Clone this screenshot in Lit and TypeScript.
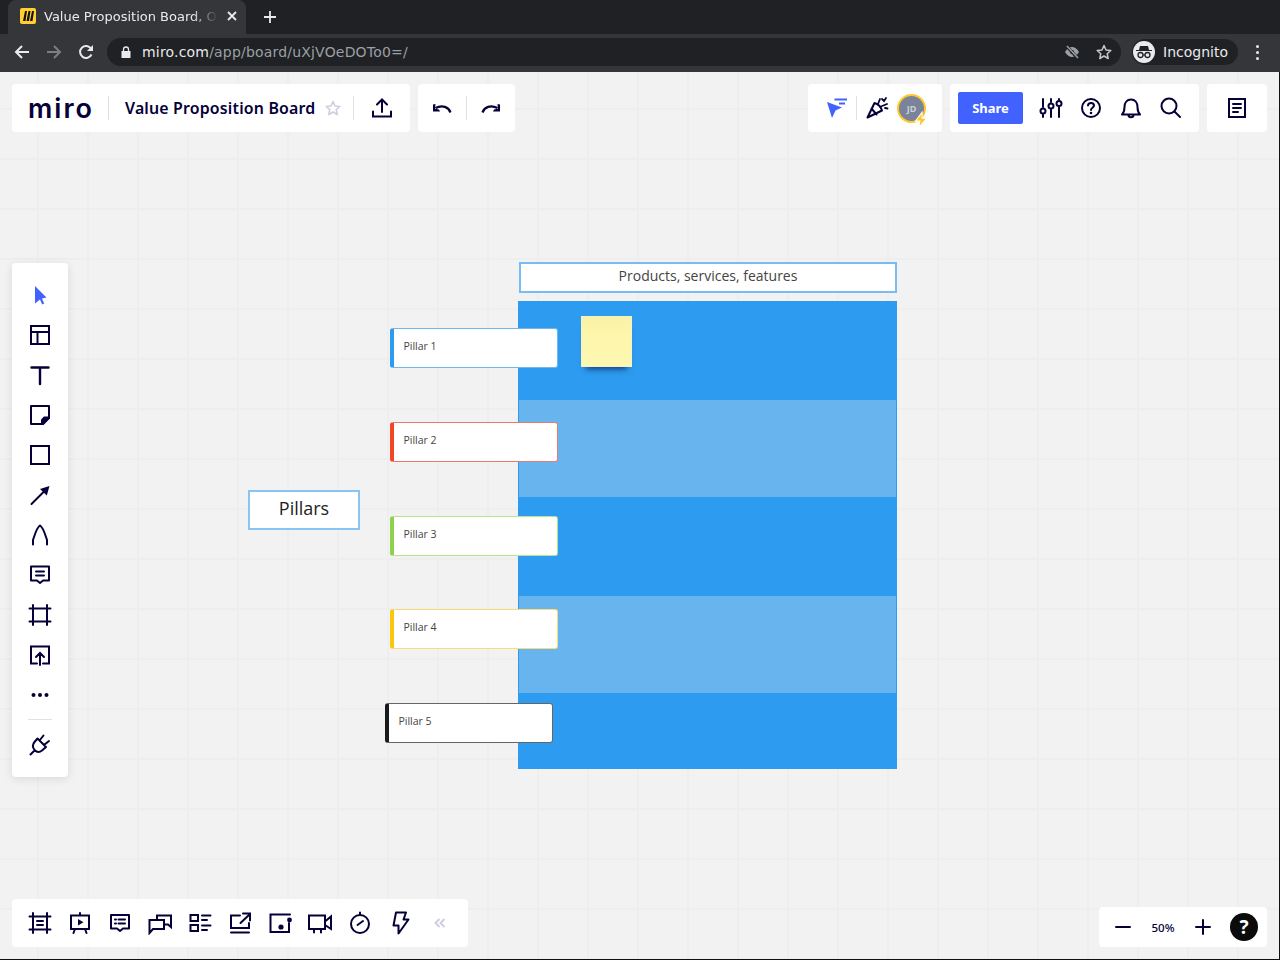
import { LitElement, html, css, svg } from "lit";
import { customElement } from "lit/decorators.js";

const ic = (body: unknown, size = 24) => html`<svg class="ic" width=${size} height=${size} viewBox="0 0 24 24">${body}</svg>`;

const I = {
  cursor: svg`<path class="bf" d="M7 3L18.500 14.500 14 15.500 16.200 20.500 14.200 21.500 12 16.500 7 20.500Z"/>`,
  layout: svg`<path d="M3 3H21V21H3ZM3 9H21M9.500 9V21"/>`,
  text: svg`<path stroke-width="2.400" d="M3.500 4.500H20.500M12 4.500V21"/>`,
  sticky: svg`<path d="M3 3H21V14.500L14.500 21H3Z" stroke-linejoin="round"/><path class="f" stroke="none" d="M22 13.500V15.500L15.500 22H13V16.500L16 13.500Z"/>`,
  rect: svg`<path d="M3 3H21V21H3Z"/>`,
  arrow: svg`<path d="M3.500 21L15.500 9"/><path class="f" stroke="none" d="M21.500 3L18.800 12.600 12 6Z"/>`,
  pen: svg`<path d="M5 21.500V17C6.500 13 8.500 4.500 12 2.500 15.500 4.500 17.500 13 19 17V21.500"/>`,
  comment: svg`<path d="M3 3.500H21V17.500H15L12 20 9 17.500H3ZM8 8.500H16M8 12.500H16" stroke-linejoin="round"/>`,
  frame: svg`<path d="M1.500 5.500H22.500M1.500 18.500H22.500M5 2V22M19 2V22"/>`,
  upload: svg`<path d="M9 20.500H3V3.500H21V20.500H15M12 22V10.500M8 14L12 10 16 14"/>`,
  dots: svg`<g class="f" stroke="none"><circle cx="5.500" cy="12" r="2"/><circle cx="12" cy="12" r="2"/><circle cx="18.500" cy="12" r="2"/></g>`,
  plug: svg`<path stroke-linejoin="round" d="M9.500 5.500L18 14 14 17.500C11.500 19.500 8.500 19 6.500 17 5 15 4 12 6.500 9ZM11.500 7.500L15.500 2.500M16 12L21 8M6.500 17.500L2.500 21.500"/>`,
  frames: svg`<path d="M1.500 5.500H22.500M1.500 18.500H22.500M5 2V22M19 2V22M9 10H15M9 14H15"/>`,
  present: svg`<path d="M3 4.500H21V18H3ZM12 2V4.500M7 18L5.500 22M17 18L18.500 22"/><path class="f" stroke="none" d="M10 8L15.500 11.250 10 14.500Z"/>`,
  chatlist: svg`<path stroke-linejoin="round" d="M3 4H21V17.500H15L12 20 9 17.500H3ZM10.500 8.500H17M10.500 12.500H17M7 8.500H8M7 12.500H8"/>`,
  chats: svg`<path d="M9 9V4.500H23V16L20 13.500H16M1.500 22V9H16V18H5Z"/>`,
  cards: svg`<path d="M2.500 4H10V10H2.500ZM2.500 14H10V20H2.500ZM14 4.500H22.500M14 9H19M14 14.500H22.500M14 19H19"/>`,
  shareout: svg`<path d="M12 4.500H3V17H21V12M3 21.500H21M12.500 12L21.500 3.500M15 2.500H22V9.500"/>`,
  note: svg`<path d="M22 3.500H2.500V21H21V12"/><circle class="f" stroke="none" cx="13" cy="16" r="2.600"/><circle class="f" stroke="none" cx="21.500" cy="9" r="2.400"/>`,
  video: svg`<path d="M1 4.500H17V18H1ZM17 10.500L23 5.500V18L17 14M6 18V21.500M13 18V21.500"/>`,
  timer: svg`<circle cx="12" cy="13" r="9"/><path d="M12 1.500V4M9.500 14L15 10"/>`,
  bolt: svg`<path stroke-linejoin="round" d="M8 1.500H18L15.500 8.500H20.500L10.500 22.500V14.500H5.500Z"/>`,
  share: svg`<path d="M12 16V3.500M7 8.500L12 3.500 17 8.500M3 15.500V20.500H21V15.500"/>`,
  undo: svg`<path stroke-width="2.200" stroke-linecap="butt" d="M20.500 16.500C18.500 11 12.500 8.500 5.500 12"/><path class="f" stroke="none" d="M3 8.500V15.500H10L9 13.500 5 12.800 5.500 8Z"/>`,
  redo: svg`<path stroke-width="2.200" stroke-linecap="butt" d="M3.500 16.500C5.500 11 11.500 8.500 18.500 12"/><path class="f" stroke="none" d="M21 8.500V15.500H14L15 13.500 19 12.800 18.500 8Z"/>`,
  sliders: svg`<path d="M4 3V11M4 18.500V21M12 3V6M12 13.500V21M20 3V3.500M20 11.500V21"/><circle cx="4" cy="15" r="2.500"/><circle cx="12" cy="10" r="2.500"/><circle cx="20" cy="7.500" r="2.500"/>`,
  question: svg`<circle cx="12" cy="12" r="9"/><path d="M9 9.500C9 7.800 10.300 7 12 7S15 8 15 9.600C15 11.800 12 11.700 12 14"/><circle class="f" stroke="none" cx="12" cy="17" r="1.300"/>`,
  bell: svg`<path stroke-linejoin="round" d="M3 18.500C5.500 16 5.500 14 5.500 11 5.500 6.500 8 3.500 12 3.500S18.500 6.500 18.500 11C18.500 14 18.500 16 21 18.500ZM9.500 19C9.500 22 14.500 22 14.500 19"/>`,
  search: svg`<circle cx="10" cy="10" r="7.500"/><path d="M15.500 15.500L21 21"/>`,
  doc: svg`<path d="M4 3H20V21H4ZM8 8H16M8 12H16M8 16H13"/>`,
  party: svg`<path stroke-linejoin="round" d="M9.500 7L2.500 21.500 17 14.500C16 11 13 8 9.500 7ZM6.500 12.500L11.500 18.500"/><path stroke-width="1.800" d="M13 8L15 3M16 10.500L22 8M17 3L19 5 21 2M20 12L22.500 12.500"/>`,
  pointer: svg`<path class="bf" d="M2 6L17 11.500 10.500 14.500 7 22Z"/><path class="bs" stroke-linecap="butt" d="M9.500 3.500H22M14 7.500H20"/>`,
};

const railIcons = [I.cursor, I.layout, I.text, I.sticky, I.rect, I.arrow, I.pen, I.comment, I.frame, I.upload, I.dots];
const dockIcons = [I.frames, I.present, I.chatlist, I.chats, I.cards, I.shareout, I.note, I.video, I.timer, I.bolt];

const pillars = [
  { name: "Pillar 1", cls: "blue", x: 390, y: 328.4 },
  { name: "Pillar 2", cls: "red", x: 390, y: 422 },
  { name: "Pillar 3", cls: "green", x: 390, y: 516 },
  { name: "Pillar 4", cls: "yellow", x: 390, y: 609.4 },
  { name: "Pillar 5", cls: "black", x: 385, y: 703 },
];
const bands = [
  { h: 98, light: false },
  { h: 97, light: true },
  { h: 99, light: false },
  { h: 97, light: true },
  { h: 75, light: false },
];

@customElement("app-root")
export class AppRoot extends LitElement {
  static styles = css`
    :host { display: block; width: 1280px; height: 960px; overflow: hidden; font-family: "Noto Sans", sans-serif; position: relative; }
    .ic { display: block; fill: none; stroke: #050038; stroke-width: 2; stroke-linecap: round; }
    .ic .f { fill: #050038; }
    .ic .bf { fill: #4262ff; stroke: none; }
    .ic .bs { stroke: #4262ff; stroke-width: 2; fill: none; }

    .tabs { height: 34px; background: #202124; display: flex; align-items: flex-end; padding-left: 8px; box-sizing: border-box; }
    .tab { width: 238px; height: 34px; background: #35363a; border-radius: 8px 8px 0 0; display: flex; align-items: center; padding: 0 8px 2px 12px; box-sizing: border-box; gap: 8px; font: 13px "DejaVu Sans", sans-serif; color: #e8eaed; }
    .fav { width: 16px; height: 16px; background: #ffd02f; border-radius: 2px; display: block; flex: none; }
    .title { flex: 1; overflow: hidden; white-space: nowrap; -webkit-mask-image: linear-gradient(90deg, #000 85%, transparent 100%); mask-image: linear-gradient(90deg, #000 85%, transparent 100%); }
    .plus { margin-left: 17px; margin-bottom: 10px; }
    .navbar { height: 38px; background: #35363a; display: flex; align-items: center; padding-left: 6px; padding-bottom: 2px; box-sizing: border-box; }
    .nav { width: 32px; display: flex; justify-content: center; }
    .omni { margin-left: 5px; width: 1014px; height: 28px; border-radius: 14px; background: #202124; display: flex; align-items: center; padding: 0 9px 0 14px; box-sizing: border-box; font: 14px "DejaVu Sans", sans-serif; color: #e8eaed; }
    .omni .url { margin-left: 11px; flex: 1; letter-spacing: 0.19px; }
    .omni .url span { color: #9aa0a6; }
    .omni .right { display: flex; gap: 16px; align-items: center; }
    .pill { margin-left: 11px; width: 106px; height: 26px; border-radius: 13px; background: #202124; display: flex; align-items: center; padding-left: 1px; gap: 8px; box-sizing: border-box; font: 14px "DejaVu Sans", sans-serif; color: #e8eaed; }
    .spy { width: 22px; height: 22px; border-radius: 50%; background: #e8eaed; display: flex; align-items: center; justify-content: center; }
    .kebab { margin-left: 18px; display: flex; flex-direction: column; gap: 3px; }
    .kebab i { width: 3px; height: 3px; border-radius: 50%; background: #e8eaed; display: block; }

    .canvas { position: absolute; left: 0; top: 72px; width: 1280px; height: 888px; background-color: #f2f2f2;
      background-image: linear-gradient(#eeeeee 2px, transparent 2px), linear-gradient(90deg, #eeeeee 2px, transparent 2px);
      background-size: 50px 50px; background-position: 37px 36px; }
    .edge-b { position: absolute; left: 0; right: 0; bottom: 0; height: 1px; background: #111; }
    .edge-r { position: absolute; top: 72px; right: 0; bottom: 0; width: 1px; background: #111; }

    .panel { position: absolute; background: #fff; border-radius: 4px; display: flex; align-items: center; box-sizing: border-box; }
    .t { top: 12px; height: 48px; }
    .logo { font: 600 27px/1 "Inter", sans-serif; color: #050038; letter-spacing: 2px; margin-left: 16px; width: 80px; flex: none; }
    .sep { width: 1px; height: 24px; background: #e1e0e7; flex: none; }
    .bname { font: 600 15.900px "Noto Sans", sans-serif; letter-spacing: 0.17px; color: #050038; margin-left: 16px; white-space: nowrap; }
    .star { margin-left: 10px; margin-right: 12px; flex: none; }
    .share { width: 65px; height: 32px; border-radius: 2px; background: #4262ff; color: #fff; font: 700 13px "Noto Sans", sans-serif; display: flex; align-items: center; justify-content: center; margin-left: 8px; }
    .avatar { position: relative; width: 29px; height: 29px; border-radius: 50%; box-sizing: border-box; border: 2.500px solid #fdc82f; background: #7a8399; color: #c9ced8; font: 700 9px "Noto Sans", sans-serif; display: flex; align-items: center; justify-content: center; }
    .avatar svg { position: absolute; right: -5px; bottom: -8px; }

    .rail { left: 12px; top: 191px; width: 56px; height: 514px; flex-direction: column; padding-top: 12px; box-shadow: 0 2px 10px rgba(5,0,56,.1); }
    .cell { width: 40px; height: 40px; display: flex; align-items: center; justify-content: center; flex: none; }
    .hr { width: 24px; height: 1px; background: #e1e0e7; margin: 4px 0 5px; flex: none; }
    .dock { left: 12px; top: 827px; width: 456px; height: 48px; padding-left: 8px; }
    .zoomp { left: 1099px; top: 835px; width: 168px; height: 40px; padding-left: 4px; }
    .pct { width: 40px; text-align: center; font: 500 11.500px "Noto Sans", sans-serif; color: #050038; }
    .help { width: 28px; height: 28px; margin-left: 7px; border-radius: 50%; background: #0b0b0b; color: #fff; font: 700 19px/28px "Noto Sans", sans-serif; text-align: center; }

    .head { position: absolute; left: 519px; top: 190px; width: 378px; height: 31px; background: #fff; border: 2px solid #79bcf3; box-sizing: border-box; font: 14px/23px "Open Sans", sans-serif; color: #444; text-align: center; }
    .board { position: absolute; left: 518px; top: 229px; width: 379px; height: 468px; display: flex; flex-direction: column; background: #2d9bf0; border: 1px solid #2d9bf0; box-sizing: border-box; }
    .band.light { background: #68b4ef; }
    .tag { position: absolute; left: 248px; top: 418px; width: 112px; height: 40px; background: #fff; border: 2px solid #8ac4f2; box-sizing: border-box; font: 18px/32px "Open Sans", sans-serif; color: #222; text-align: center; }
    .card { position: absolute; width: 168px; height: 40px; background: #fff; border: 1px solid var(--c); border-left: 4px solid var(--s); border-radius: 3px; box-sizing: border-box; font: 10.500px/34px "Open Sans", sans-serif; color: #444; padding-left: 9.500px; }
    .blue { --c: #6db7f2; --s: #2d9bf0; }
    .red { --c: #ea7a6b; --s: #f24726; }
    .green { --c: #b5e48e; --s: #8fd14f; }
    .yellow { --c: #f8dc78; --s: #fac710; }
    .black { --c: #666; --s: #1a1a1a; }
    .note { position: absolute; left: 581px; top: 244px; width: 51px; height: 51px; box-sizing: border-box; border: 1px solid #f7f3c0; background: linear-gradient(#f8f2a6, #fdf6aa 30%, #fdf7b2); box-shadow: 0 7px 6px -5px rgba(5,15,70,.7); }
  `;

  render() {
    return html`
      <div class="tabs">
        <div class="tab">
          <svg class="fav" viewBox="0 0 16 16"><path d="M3 13L5 3H7L5.500 13ZM6.500 13L8.500 3H10.500L9 13ZM10 13L12 3H14L12.500 13Z" fill="#111"/></svg>
          <div class="title">Value Proposition Board, Online Whiteboard</div>
          <svg width="12" height="12" viewBox="0 0 12 12"><path d="M2 2L10 10M10 2L2 10" stroke="#e8eaed" stroke-width="1.800"/></svg>
        </div>
        <svg class="plus" width="14" height="14" viewBox="0 0 14 14"><path d="M7 1V13M1 7H13" stroke="#e8eaed" stroke-width="1.800"/></svg>
      </div>
      <div class="navbar">
        <div class="nav"><svg width="16" height="16" viewBox="0 0 16 16"><path d="M15 8H2M8 2L2 8l6 6" fill="none" stroke="#e8eaed" stroke-width="2"/></svg></div>
        <div class="nav"><svg width="16" height="16" viewBox="0 0 16 16"><path d="M1 8H14M8 2l6 6-6 6" fill="none" stroke="#7c7e82" stroke-width="2"/></svg></div>
        <div class="nav"><svg width="16" height="16" viewBox="0 0 16 16"><path d="M13.500 10.500A6 6 0 1 1 13 4.500" fill="none" stroke="#e8eaed" stroke-width="2"/><path d="M15 1V7H9Z" fill="#e8eaed"/></svg></div>
        <div class="omni">
          <svg width="10" height="12" viewBox="0 0 10 12"><path d="M0.500 5H9.500V12H0.500Z" fill="#e8eaed"/><path d="M2.500 5V3.500a2.500 2.500 0 0 1 5 0V5" fill="none" stroke="#e8eaed" stroke-width="1.300"/></svg>
          <div class="url">miro.com<span>/app/board/uXjVOeDOTo0=/</span></div>
          <div class="right">
            <svg width="16" height="14" viewBox="0 0 16 14"><path d="M1 7C3 3.500 5.500 2 8 2s5 1.500 7 5c-2 3.500-4.500 5-7 5S3 10.500 1 7Z" fill="#9aa0a6"/><circle cx="8" cy="7" r="2" fill="#202124"/><path d="M2.500 1L13.500 13" stroke="#202124" stroke-width="3.200"/><path d="M3 1L14 13" stroke="#9aa0a6" stroke-width="1.500"/></svg>
            <svg width="16" height="16" viewBox="0 0 16 16"><path d="M8 1.500L10 6l4.800.5-3.600 3.200 1 4.800L8 12l-4.200 2.500 1-4.800L1.200 6.500 6 6Z" fill="none" stroke="#c4c7c5" stroke-width="1.500" stroke-linejoin="round"/></svg>
          </div>
        </div>
        <div class="pill">
          <div class="spy"><svg width="18" height="16" viewBox="0 0 18 16"><path d="M5 2H13L14 6H17V7H1V6H4Z" fill="#202124"/><circle cx="5.500" cy="11" r="2.500" fill="none" stroke="#202124" stroke-width="1.300"/><circle cx="12.500" cy="11" r="2.500" fill="none" stroke="#202124" stroke-width="1.300"/><path d="M8 11H10" stroke="#202124"/></svg></div>
          Incognito
        </div>
        <div class="kebab"><i></i><i></i><i></i></div>
      </div>

      <div class="canvas">
        <div class="head">Products, services, features</div>
        <div class="board">
          ${bands.map((b) => html`<div class="band ${b.light ? "light" : ""}" style="height:${b.h}px"></div>`)}
        </div>
        <div class="note"></div>
        <div class="tag">Pillars</div>
        ${pillars.map((p) => html`<div class="card ${p.cls}" style="left:${p.x}px;top:${p.y - 72}px">${p.name}</div>`)}

        <div class="panel t" style="left:12px;width:398px">
          <div class="logo">miro</div>
          <div class="sep"></div>
          <div class="bname">Value Proposition Board</div>
          <svg class="star" width="16" height="16" viewBox="0 0 16 16"><path d="M8 1.500L10 6l4.800.5-3.600 3.200 1 4.800L8 12l-4.200 2.500 1-4.800L1.200 6.500 6 6Z" fill="none" stroke="#cfcde0" stroke-width="1.600" stroke-linejoin="round"/></svg>
          <div class="sep"></div>
          <div class="cell" style="margin-left:8px">${ic(I.share)}</div>
        </div>
        <div class="panel t" style="left:418px;width:97px;padding-left:4px">
          <div class="cell" style="margin-right:4px">${ic(I.undo)}</div><div class="sep"></div><div class="cell" style="margin-left:4px">${ic(I.redo)}</div>
        </div>
        <div class="panel t" style="left:808px;width:134px;padding-left:17px">
          ${ic(I.pointer)}
          <div class="sep" style="margin-left:7px;margin-right:8px"></div>
          ${ic(I.party)}
          <div class="avatar" style="margin-left:8px">JD
            <svg width="16" height="18" viewBox="0 0 14 16"><path d="M8 1L2 9H6L5 15 12 6.500H8Z" fill="#fdc82f" stroke="#fff" stroke-width="0.900"/></svg>
          </div>
        </div>
        <div class="panel t" style="left:950px;width:249px">
          <div class="share">Share</div>
          <div class="cell" style="margin-left:8px">${ic(I.sliders)}</div>
          <div class="cell">${ic(I.question)}</div>
          <div class="cell">${ic(I.bell)}</div>
          <div class="cell">${ic(I.search)}</div>
        </div>
        <div class="panel t" style="left:1207px;width:60px;justify-content:center">${ic(I.doc)}</div>

        <div class="panel rail">
          ${railIcons.map((i) => html`<div class="cell">${ic(i)}</div>`)}
          <div class="hr"></div>
          <div class="cell">${ic(I.plug)}</div>
        </div>
        <div class="panel dock">
          ${dockIcons.map((i) => html`<div class="cell">${ic(i)}</div>`)}
          <div class="cell"><svg width="12" height="10" viewBox="0 0 12 10"><path d="M5.500 1L1.500 5l4 4M10.500 1L6.500 5l4 4" fill="none" stroke="#cfcde0" stroke-width="2"/></svg></div>
        </div>
        <div class="panel zoomp">
          <div class="cell">${ic(svg`<path d="M5 12H19"/>`)}</div>
          <div class="pct">50%</div>
          <div class="cell">${ic(svg`<path d="M5 12H19M12 5V19"/>`)}</div>
          <div class="help">?</div>
        </div>
      </div>
      <div class="edge-b"></div>
      <div class="edge-r"></div>
    `;
  }
}
